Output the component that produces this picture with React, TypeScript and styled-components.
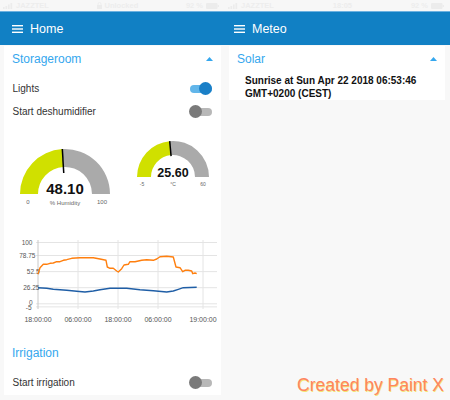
import React from "react";
import styled, { createGlobalStyle } from "styled-components";

const Global = createGlobalStyle`
  html, body { margin: 0; padding: 0; background: #f8f8f8; }
  body {
    font-family: "Liberation Sans", Arial, Helvetica, sans-serif;
    width: 450px;
    height: 400px;
    overflow: hidden;
  }
`;

const Page = styled.div`
  position: relative;
  width: 450px;
  height: 400px;
  background: #f8f8f8;
`;

const StatusBar = styled.div`
  display: grid;
  grid-template-columns: 225px 225px;
  height: 11px;
  background: #f7f7f7;
  border-bottom: 1px solid #6db1e0;
`;

const StatusHalf = styled.div`
  display: flex;
  align-items: center;
  justify-content: space-between;
  padding: 0 6px 0 3px;
  font-size: 7.5px;
  font-weight: bold;
  color: #ededed;
  white-space: nowrap;
`;

const StatusGroup = styled.span`
  display: inline-flex;
  align-items: center;
  gap: 3px;
`;

const Header = styled.div`
  display: grid;
  grid-template-columns: 225px 225px;
  height: 33px;
  background: #1180c4;
`;

const HeaderTitle = styled.div<{ $pad: number }>`
  display: flex;
  align-items: center;
  gap: 7px;
  padding-left: ${(p) => p.$pad}px;
  color: #ffffff;
  font-size: 12.5px;
`;

const Columns = styled.div`
  display: grid;
  grid-template-columns: 225px 225px;
  align-items: start;
`;

const Column = styled.div<{ $right: number }>`
  padding: 1px ${(p) => p.$right}px 0 4px;
`;

const Card = styled.div`
  background: #ffffff;
  display: flex;
  flex-direction: column;
  padding-bottom: 1px;
`;

const GroupHeader = styled.div<{ $top?: number }>`
  display: flex;
  align-items: center;
  justify-content: space-between;
  height: 26px;
  margin-top: ${(p) => p.$top ?? 0}px;
  padding: 0 8px;
  color: #35a7ee;
  font-size: 12px;
`;

const RowList = styled.div`
  padding-top: 5px;
  display: flex;
  flex-direction: column;
`;

const Row = styled.div`
  display: flex;
  align-items: center;
  justify-content: space-between;
  height: 23px;
  padding: 0 9px 0 8.5px;
  font-size: 10px;
  color: #333333;
`;

const Toggle = styled.div<{ $on: boolean }>`
  position: relative;
  width: 22px;
  height: 8px;
  border-radius: 4px;
  background: ${(p) => (p.$on ? "#62b6ea" : "#b8b8b8")};
  &::after {
    content: "";
    position: absolute;
    top: -2.5px;
    left: ${(p) => (p.$on ? "8.5px" : "-1.5px")};
    width: 13px;
    height: 13px;
    border-radius: 50%;
    background: ${(p) => (p.$on ? "#1a7fc7" : "#7a7a7a")};
  }
`;

const GaugeRow = styled.div`
  display: flex;
  align-items: flex-start;
  gap: 3px;
  height: 110px;
  padding-left: 6px;
`;

const ChartBox = styled.div`
  height: 92px;
`;

const SolarText = styled.div`
  padding: 1.5px 8px 0 16px;
  height: 25.5px;
  font-size: 10px;
  font-weight: bold;
  line-height: 13px;
  color: #111111;
`;

const Watermark = styled.div`
  position: absolute;
  right: 6px;
  bottom: 5px;
  font-size: 17.5px;
  line-height: 20px;
  color: #ff8462;
  text-shadow: 0.8px 0.8px 0 rgba(240, 225, 70, 0.75);
  white-space: nowrap;
`;

const Hamburger = () => (
  <svg width="11" height="8" viewBox="0 0 11 8">
    <rect x="0" y="0" width="11" height="1.4" fill="#fff" />
    <rect x="0" y="3.3" width="11" height="1.4" fill="#fff" />
    <rect x="0" y="6.6" width="11" height="1.4" fill="#fff" />
  </svg>
);

const Caret = () => (
  <svg width="7" height="4" viewBox="0 0 7 4">
    <polygon points="0,4 3.5,0 7,4" fill="#35a7ee" />
  </svg>
);

const Signal = () => (
  <svg width="10" height="6" viewBox="0 0 10 6">
    <rect x="0" y="4" width="1.6" height="2" fill="#ececec" />
    <rect x="2.5" y="3" width="1.6" height="3" fill="#ececec" />
    <rect x="5" y="1.5" width="1.6" height="4.5" fill="#ececec" />
    <rect x="7.5" y="0" width="1.6" height="6" fill="#ececec" />
  </svg>
);

const Lock = () => (
  <svg width="5" height="7" viewBox="0 0 5 7">
    <path d="M1 3 V2 a1.5 1.5 0 0 1 3 0 V3" fill="none" stroke="#ececec" strokeWidth="0.8" />
    <rect x="0" y="3" width="5" height="4" fill="#ececec" />
  </svg>
);

const Battery = () => (
  <svg width="13" height="6" viewBox="0 0 13 6">
    <rect x="0" y="0" width="11.5" height="6" rx="1" fill="#ececec" />
    <rect x="11.8" y="2" width="1.2" height="2" fill="#ececec" />
  </svg>
);

type GaugeProps = {
  w: number;
  h: number;
  cx: number;
  cy: number;
  R: number;
  r: number;
  fraction: number;
  value: string;
  valueSize: number;
  min: string;
  max: string;
  unit: string;
  labelSize: number;
  labelY: number;
  minX: number;
  maxX: number;
  needleInner: number;
};

const Gauge = (p: GaugeProps) => {
  const th = Math.PI * p.fraction;
  const px = p.cx - p.R * Math.cos(th);
  const py = p.cy - p.R * Math.sin(th);
  const ix = p.cx - p.r * Math.cos(th);
  const iy = p.cy - p.r * Math.sin(th);
  const nx = p.cx - p.needleInner * Math.cos(th);
  const ny = p.cy - p.needleInner * Math.sin(th);
  const yellow = `M ${p.cx - p.R} ${p.cy} A ${p.R} ${p.R} 0 0 1 ${px} ${py} L ${ix} ${iy} A ${p.r} ${p.r} 0 0 0 ${p.cx - p.r} ${p.cy} Z`;
  const gray = `M ${px} ${py} A ${p.R} ${p.R} 0 0 1 ${p.cx + p.R} ${p.cy} L ${p.cx + p.r} ${p.cy} A ${p.r} ${p.r} 0 0 0 ${ix} ${iy} Z`;
  return (
    <svg width={p.w} height={p.h} viewBox={`0 0 ${p.w} ${p.h}`}>
      <path d={yellow} fill="#d0e000" />
      <path d={gray} fill="#aaaaaa" />
      <line x1={nx} y1={ny} x2={px} y2={py} stroke="#000" strokeWidth="1.5" />
      <text
        x={p.cx}
        y={p.cy}
        textAnchor="middle"
        fontSize={p.valueSize}
        fontWeight="bold"
        fill="#111"
        fontFamily="Liberation Sans, Arial, sans-serif"
      >
        {p.value}
      </text>
      <g fontSize={p.labelSize} fill="#666" fontFamily="Liberation Sans, Arial, sans-serif" textAnchor="middle">
        <text x={p.minX} y={p.labelY}>{p.min}</text>
        <text x={p.cx} y={p.labelY + 0.5}>{p.unit}</text>
        <text x={p.maxX} y={p.labelY}>{p.max}</text>
      </g>
    </svg>
  );
};

const yOf = (v: number) => 302.8 - v * 0.613;

const orangePts: [number, number][] = [
  [38, 273.3], [40, 266.7], [43.3, 263.3], [46.7, 263.3], [50, 262.3], [53.3, 262], [56.7, 260.7],
  [60, 260.7], [63.3, 259.3], [66.7, 258.7], [71.7, 257.3], [80, 256.7], [93.3, 256.7], [100, 258],
  [106, 259.3], [107.3, 266], [110, 267.3], [113.3, 267.3], [116.7, 270], [118.3, 271], [121.7, 267.7],
  [124, 264], [128.3, 263.3], [130, 260.7], [135, 260.7], [141.7, 259.3], [146.7, 258.7], [153.3, 259.3],
  [156.7, 258], [160, 255.7], [166.7, 255.3], [173.3, 256], [176, 266], [180, 266.7], [182.7, 270.7],
  [185, 269.3], [188.3, 269.3], [191.7, 270], [192.7, 272.7], [195, 272], [196.7, 272.7],
];

const bluePts: [number, number][] = [
  [38, 286.7], [46.7, 287.3], [53.3, 288.3], [66.7, 289.3], [76.7, 290.3], [85, 291], [93.3, 290],
  [100, 288.7], [110, 287.3], [126.7, 287.3], [140, 288.7], [153.3, 289.7], [166.7, 291], [173.3, 290],
  [178.3, 288.3], [183.3, 286.7], [196.7, 286.3],
];

const toPath = (pts: [number, number][]) =>
  pts.map((q, i) => `${i === 0 ? "M" : "L"} ${q[0]} ${q[1]}`).join(" ");

const yLabels: { v: number; t: string; x: number; dy: number }[] = [
  { v: 100, t: "100", x: 32.5, dy: 2.3 },
  { v: 78.75, t: "78.75", x: 35.5, dy: 2.3 },
  { v: 52.5, t: "52.5", x: 39.5, dy: 2.3 },
  { v: 26.25, t: "26.25", x: 39.5, dy: 2.3 },
  { v: 0, t: "0", x: 32.5, dy: 1.3 },
  { v: -5, t: "-5", x: 31.5, dy: 3.3 },
];

const xLabels: { x: number; t: string }[] = [
  { x: 38, t: "18:00:00" },
  { x: 78, t: "06:00:00" },
  { x: 118, t: "18:00:00" },
  { x: 158, t: "06:00:00" },
  { x: 203, t: "19:00:00" },
];

const Chart = () => (
  <svg width="217" height="92" viewBox="4 232 217 92">
    <g stroke="#e4e4e4" strokeWidth="1">
      {yLabels.map((l) => (
        <line key={l.t} x1={36} x2={217} y1={yOf(l.v)} y2={yOf(l.v)} />
      ))}
      {xLabels.slice(1).map((l) => (
        <line key={l.x} x1={l.x} x2={l.x} y1={239} y2={308} />
      ))}
    </g>
    <line x1={38} x2={38} y1={239} y2={308} stroke="#c8c8c8" strokeWidth="1" />
    <g fontSize="6.5" fill="#555" fontFamily="Liberation Sans, Arial, sans-serif" textAnchor="end">
      {yLabels.map((l) => (
        <text key={l.t} x={l.x} y={yOf(l.v) + l.dy}>{l.t}</text>
      ))}
    </g>
    <g fontSize="7" fill="#555" fontFamily="Liberation Sans, Arial, sans-serif" textAnchor="middle">
      {xLabels.map((l, i) => (
        <text key={i} x={l.x} y={320.5}>{l.t}</text>
      ))}
    </g>
    <path d={toPath(orangePts)} fill="none" stroke="#ff7f0e" strokeWidth="1.4" strokeLinejoin="round" />
    <path d={toPath(bluePts)} fill="none" stroke="#1f5ea6" strokeWidth="1.4" strokeLinejoin="round" />
  </svg>
);

const StatusContent = ({ middle, lock }: { middle: string; lock: boolean }) => (
  <StatusHalf>
    <StatusGroup>
      <Signal />
      <span>JAZZTEL</span>
    </StatusGroup>
    <StatusGroup>
      {lock && <Lock />}
      <span>{middle}</span>
    </StatusGroup>
    <StatusGroup>
      <span>92 %</span>
      <Battery />
    </StatusGroup>
  </StatusHalf>
);

export default function App() {
  return (
    <Page>
      <Global />
      <StatusBar>
        <StatusContent middle="Unlocked" lock={true} />
        <StatusContent middle="18:05" lock={false} />
      </StatusBar>
      <Header>
        <HeaderTitle $pad={12}>
          <Hamburger />
          <span>Home</span>
        </HeaderTitle>
        <HeaderTitle $pad={9}>
          <Hamburger />
          <span>Meteo</span>
        </HeaderTitle>
      </Header>
      <Columns>
        <Column $right={4}>
          <Card>
            <GroupHeader>
              <span>Storageroom</span>
              <Caret />
            </GroupHeader>
            <RowList>
              <Row>
                <span>Lights</span>
                <Toggle $on={true} />
              </Row>
              <Row>
                <span>Start deshumidifier</span>
                <Toggle $on={false} />
              </Row>
            </RowList>
            <GaugeRow>
              <Gauge
                w={110}
                h={90}
                cx={55}
                cy={71}
                R={45}
                r={27}
                fraction={0.481}
                value="48.10"
                valueSize={15}
                min="0"
                max="100"
                unit="% Humidity"
                labelSize={6}
                labelY={81}
                minX={18}
                maxX={92}
                needleInner={21}
              />
              <Gauge
                w={98}
                h={90}
                cx={50}
                cy={54}
                R={36}
                r={22}
                fraction={0.4708}
                value="25.60"
                valueSize={12.5}
                min="-5"
                max="60"
                unit="°C"
                labelSize={5}
                labelY={62.5}
                minX={19}
                maxX={80}
                needleInner={21}
              />
            </GaugeRow>
            <ChartBox>
              <Chart />
            </ChartBox>
            <GroupHeader $top={15}>
              <span>Irrigation</span>
            </GroupHeader>
            <RowList>
              <Row>
                <span>Start irrigation</span>
                <Toggle $on={false} />
              </Row>
            </RowList>
          </Card>
        </Column>
        <Column $right={5}>
          <Card>
            <GroupHeader>
              <span>Solar</span>
              <Caret />
            </GroupHeader>
            <SolarText>
              Sunrise at Sun Apr 22 2018 06:53:46
              <br />
              GMT+0200 (CEST)
            </SolarText>
          </Card>
        </Column>
      </Columns>
      <Watermark>Created by Paint X</Watermark>
    </Page>
  );
}
